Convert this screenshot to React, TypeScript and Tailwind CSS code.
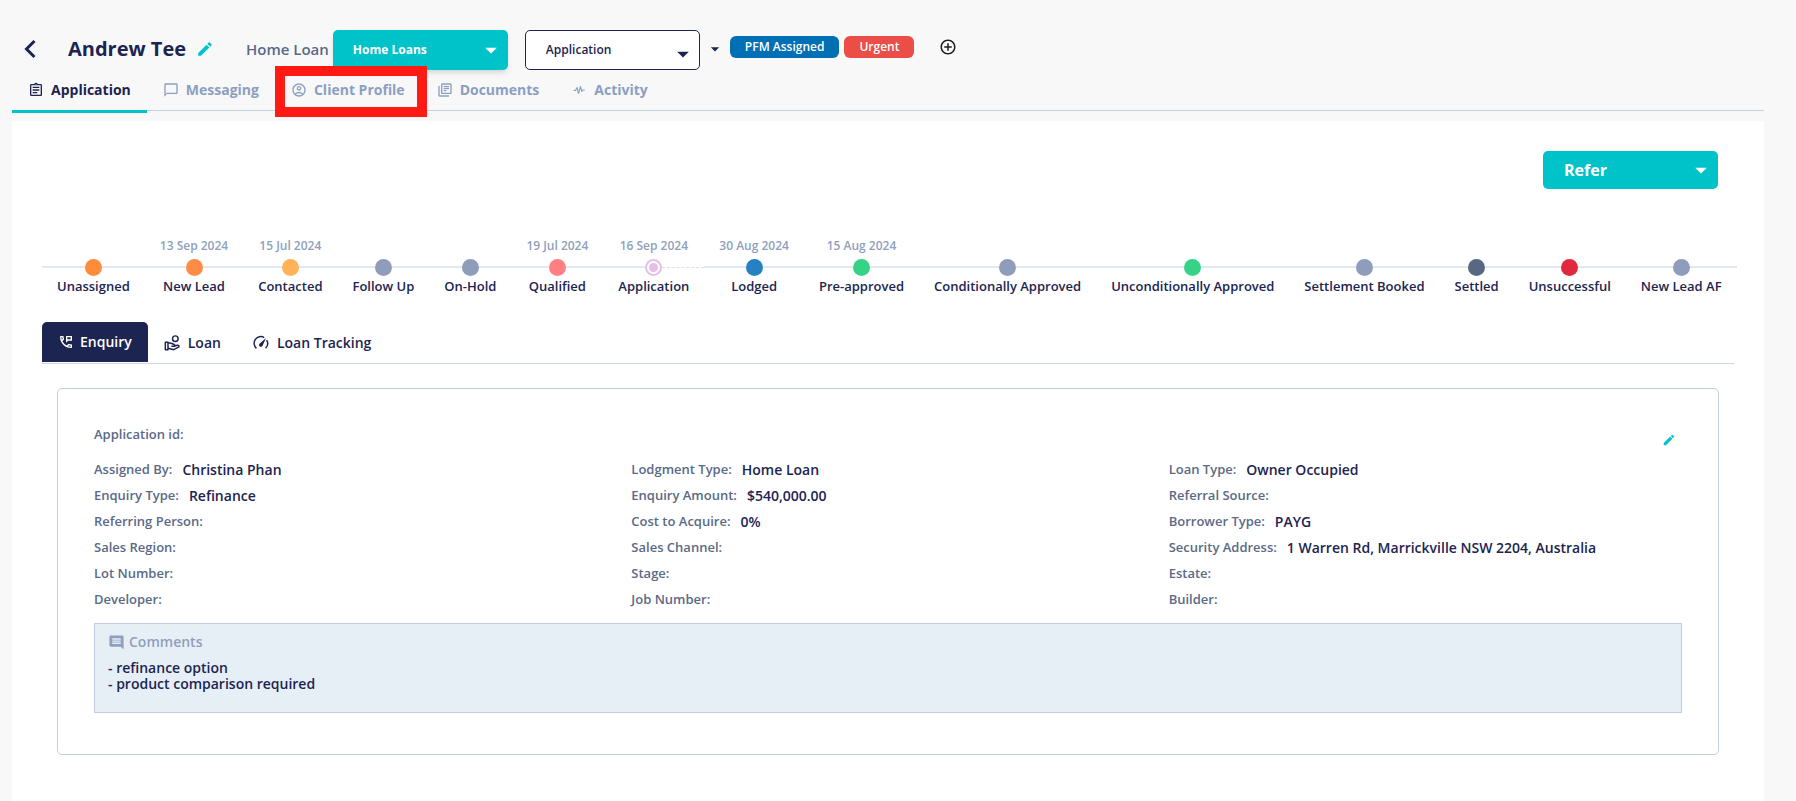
import type { ReactNode } from "react";
import clsx from "clsx";
import {
  MdAddCircleOutline,
  MdArrowDropDown,
  MdChatBubbleOutline,
  MdComment,
  MdEdit,
  MdOutlineAccountCircle,
  MdOutlineAssignment,
  MdOutlineLibraryBooks,
  MdOutlinePermPhoneMsg,
} from "react-icons/md";

type Stage = {
  label: string;
  date?: string;
  color: string;
  current?: boolean;
};

const stages: Stage[] = [
  { label: "Unassigned", color: "bg-[#ff8c3b]" },
  { label: "New Lead", date: "13 Sep 2024", color: "bg-[#ff8c46]" },
  { label: "Contacted", date: "15 Jul 2024", color: "bg-[#ffb257]" },
  { label: "Follow Up", color: "bg-[#8f9dbb]" },
  { label: "On-Hold", color: "bg-[#8f9dbb]" },
  { label: "Qualified", date: "19 Jul 2024", color: "bg-[#ff7f82]" },
  { label: "Application", date: "16 Sep 2024", color: "bg-[#e6bfe8]", current: true },
  { label: "Lodged", date: "30 Aug 2024", color: "bg-[#2581c1]" },
  { label: "Pre-approved", date: "15 Aug 2024", color: "bg-[#36d387]" },
  { label: "Conditionally Approved", color: "bg-[#8f9dbb]" },
  { label: "Unconditionally Approved", color: "bg-[#36d387]" },
  { label: "Settlement Booked", color: "bg-[#8f9dbb]" },
  { label: "Settled", color: "bg-[#586881]" },
  { label: "Unsuccessful", color: "bg-[#e0293d]" },
  { label: "New Lead AF", color: "bg-[#8f9dbb]" },
];

const details: { label: string; value?: string }[][] = [
  [
    { label: "Assigned By:", value: "Christina Phan" },
    { label: "Enquiry Type:", value: "Refinance" },
    { label: "Referring Person:" },
    { label: "Sales Region:" },
    { label: "Lot Number:" },
    { label: "Developer:" },
  ],
  [
    { label: "Lodgment Type:", value: "Home Loan" },
    { label: "Enquiry Amount:", value: "$540,000.00" },
    { label: "Cost to Acquire:", value: "0%" },
    { label: "Sales Channel:" },
    { label: "Stage:" },
    { label: "Job Number:" },
  ],
  [
    { label: "Loan Type:", value: "Owner Occupied" },
    { label: "Referral Source:" },
    { label: "Borrower Type:", value: "PAYG" },
    { label: "Security Address:", value: "1 Warren Rd, Marrickville NSW 2204, Australia" },
    { label: "Estate:" },
    { label: "Builder:" },
  ],
];

function ActivityIcon() {
  return (
    <svg width="16" height="16" viewBox="-1 -1 16 16" fill="none" stroke="currentColor" strokeWidth="1.1" strokeLinejoin="round">
      <path d="M1.5 7.5h2L5 4.5l1.5 6 2-7 1.3 5 1-1.5h2" />
    </svg>
  );
}

function LoanIcon() {
  return (
    <svg width="16" height="16" viewBox="0 0 24 24" fill="none" stroke="currentColor" strokeWidth="2.2" strokeLinejoin="round">
      <circle cx="17" cy="5.5" r="4.2" />
      <path d="M2 11h4v11H2zM6 12h3.5l6 2.3c1.6.8 1 2.7-.7 2.7H11" />
      <path d="M15.5 16.5l4.5-1.2c1.6-.3 3 1 2.4 2.4L14.5 22 6 20" />
    </svg>
  );
}

function TrackingIcon() {
  return (
    <svg width="16" height="16" viewBox="0 0 24 24" fill="none" stroke="currentColor" strokeWidth="2.2">
      <path d="M5.2 20A10 10 0 0 1 16.8 3.8M20.4 7.6A10 10 0 0 1 18.8 20" />
      <path d="M19.5 4.5l-5 11.4a2.8 2.8 0 1 1-4.3-3.2z" fill="currentColor" stroke="none" />
    </svg>
  );
}

const tabs: { label: string; icon: ReactNode; active?: boolean; highlighted?: boolean }[] = [
  { label: "Application", icon: <MdOutlineAssignment size={16} />, active: true },
  { label: "Messaging", icon: <MdChatBubbleOutline size={16} /> },
  { label: "Client Profile", icon: <MdOutlineAccountCircle size={16} />, highlighted: true },
  { label: "Documents", icon: <MdOutlineLibraryBooks size={16} /> },
  { label: "Activity", icon: <ActivityIcon /> },
];

function SelectBox({ label, value, className, caretClass }: { label: string; value: string; className: string; caretClass: string }) {
  return (
    <div className="relative w-[175px]">
      <select
        aria-label={label}
        defaultValue={value}
        className={clsx("h-10 w-full appearance-none rounded-[5px] pr-10 pl-5 text-xs", className)}
      >
        <option>{value}</option>
      </select>
      <MdArrowDropDown size={28} className={clsx("pointer-events-none absolute right-[3px]", caretClass)} />
    </div>
  );
}

function Header() {
  return (
    <header className="flex items-start pt-[30px]">
      <div className="flex h-10 items-center pb-0.5">
        <button type="button" aria-label="Back" className="ml-3 text-[#1c2451]">
          <svg width="12" height="20" viewBox="0 0 12 20" fill="none" stroke="currentColor" strokeWidth="3">
            <path d="M10.5 2L2.5 10l8 8" />
          </svg>
        </button>
        <h1 className="ml-8 text-xl font-bold text-[#1c2451]">Andrew Tee</h1>
        <button type="button" aria-label="Edit name" className="ml-2.5 text-[#00c2c9]">
          <MdEdit size={18} />
        </button>
        <span className="ml-8 text-[15px] font-semibold text-[#5a6a87]">Home Loan</span>
      </div>
      <div className="ml-1">
        <SelectBox
          label="Loan product"
          value="Home Loans"
          className="bg-[#00c2c9] font-bold text-white shadow-md"
          caretClass="top-1.5 text-white"
        />
      </div>
      <div className="ml-[17px]">
        <SelectBox
          label="Stage"
          value="Application"
          className="border border-[#1c2451] bg-white font-semibold text-[#1c2451]"
          caretClass="top-2.5 text-[#1c2451]"
        />
      </div>
      <div className="flex h-10 items-center pb-1.5">
        <button type="button" aria-label="More labels" className="ml-[5px] pt-1 text-[#1c2451]">
          <MdArrowDropDown size={20} />
        </button>
        <span className="ml-[5px] rounded-md bg-[#006fb4] px-[15px] text-xs leading-[22px] font-semibold text-white">
          PFM Assigned
        </span>
        <span className="ml-[5px] rounded-md bg-[#eb4d47] px-[15px] text-xs leading-[22px] font-semibold text-white">
          Urgent
        </span>
        <button type="button" aria-label="Add label" className="ml-[25px] text-[#1d1d1f]">
          <MdAddCircleOutline size={18} />
        </button>
      </div>
    </header>
  );
}

function MainTabs() {
  return (
    <nav className="flex border-b border-[#c6d2e2]" aria-label="Client">
      {tabs.map((tab) => (
        <a
          key={tab.label}
          href="#"
          className={clsx(
            "relative flex h-10 items-center gap-[7px] px-4 text-sm font-bold",
            tab.active ? "text-[#1c2451]" : "text-[#8b9fc2]",
          )}
          aria-current={tab.active ? "page" : undefined}
        >
          {tab.icon}
          {tab.label}
          {tab.active && <span className="absolute inset-x-0 top-full h-[3px] bg-[#00c2c9]" />}
          {tab.highlighted && (
            <span className="pointer-events-none absolute -top-1 -right-1.5 left-0 z-10 h-[51px] border-10 border-[#ff1a14]" />
          )}
        </a>
      ))}
    </nav>
  );
}

function Timeline() {
  return (
    <ol className="flex">
      {stages.map((stage) => (
        <li key={stage.label} className="flex grow flex-col items-center whitespace-nowrap text-[#1c2451]">
          <span className="h-[18px] px-[15px] text-xs leading-4 font-semibold text-[#8f9fbd]">{stage.date}</span>
          <div className="flex h-[22px] w-full items-center justify-center">
            <span className="h-0.5 flex-1 bg-[#e2e8f2]" />
            {stage.current ? (
              <span className="flex size-[17px] items-center justify-center rounded-full border-2 border-[#e6bfe8] bg-white">
                <span className={clsx("size-[9px] rounded-full", stage.color)} />
              </span>
            ) : (
              <span className={clsx("size-[17px] rounded-full", stage.color)} />
            )}
            <span
              className={clsx(
                "flex-1",
                stage.current ? "border-t border-dashed border-[#dcdfe6]" : "h-0.5 bg-[#e2e8f2]",
              )}
            />
          </div>
          <span className="px-[15px] text-[13px] leading-4 font-semibold">{stage.label}</span>
        </li>
      ))}
    </ol>
  );
}

function SubTabs() {
  return (
    <nav className="flex h-[42px] items-start border-b border-[#cdd5e6] text-sm font-semibold text-[#1c2451]" aria-label="Application">
      <a
        href="#"
        aria-current="page"
        className="flex h-10 items-center gap-1.5 rounded-t-[5px] bg-[#1c2451] px-4 text-white"
      >
        <MdOutlinePermPhoneMsg size={16} />
        Enquiry
      </a>
      <a href="#" className="flex h-[42px] items-center gap-2 px-4">
        <LoanIcon />
        Loan
      </a>
      <a href="#" className="flex h-[42px] items-center gap-2 px-4">
        <TrackingIcon />
        Loan Tracking
      </a>
    </nav>
  );
}

function EnquiryCard() {
  return (
    <section className="mx-[15px] mt-6 rounded-[5px] border border-[#c3cde0] px-9 pt-8 pb-[41px]">
      <div className="flex items-center justify-between">
        <span className="text-[13px] leading-[26px] font-semibold text-[#5a6a87]">Application id:</span>
        <button type="button" aria-label="Edit enquiry" className="mr-1.5 pt-3 text-[#00c2c9]">
          <MdEdit size={14} />
        </button>
      </div>
      <div className="mt-2.5 grid grid-cols-3 gap-6">
        {details.map((column, i) => (
          <dl key={i}>
            {column.map((item) => (
              <div key={item.label} className="flex h-[26px] items-center gap-2.5 whitespace-nowrap">
                <dt className="text-[13px] font-semibold text-[#5a6a87]">{item.label}</dt>
                <dd className="text-sm font-semibold text-[#1c2451]">{item.value}</dd>
              </div>
            ))}
          </dl>
        ))}
      </div>
      <div className="mt-2.5 h-[90px] border border-[#c1cde0] bg-[#e7eff6] px-[13px] pt-2">
        <h2 className="flex items-center gap-1 text-sm font-semibold text-[#8f9fbd]">
          <MdComment size={17} />
          Comments
        </h2>
        <p className="mt-2 text-sm leading-4 font-semibold text-[#1c2451]">
          - refinance option
          <br />- product comparison required
        </p>
      </div>
    </section>
  );
}

export default function App() {
  return (
    <div className="flex min-h-screen flex-col bg-[#f8f8f8] pr-8 pl-3 font-['Open_Sans',sans-serif]">
      <Header />
      <MainTabs />
      <main className="mt-2.5 flex-1 bg-white px-[30px] pt-[30px]">
        <div className="flex justify-end pr-4">
          <button
            type="button"
            className="flex h-[38px] w-[175px] items-center justify-between rounded-[5px] bg-[#00c2c9] pr-[3px] pl-[21px] text-base font-bold text-white"
          >
            Refer
            <MdArrowDropDown size={28} />
          </button>
        </div>
        <div className="mt-[49px]">
          <Timeline />
        </div>
        <div className="mt-7">
          <SubTabs />
        </div>
        <EnquiryCard />
      </main>
    </div>
  );
}
